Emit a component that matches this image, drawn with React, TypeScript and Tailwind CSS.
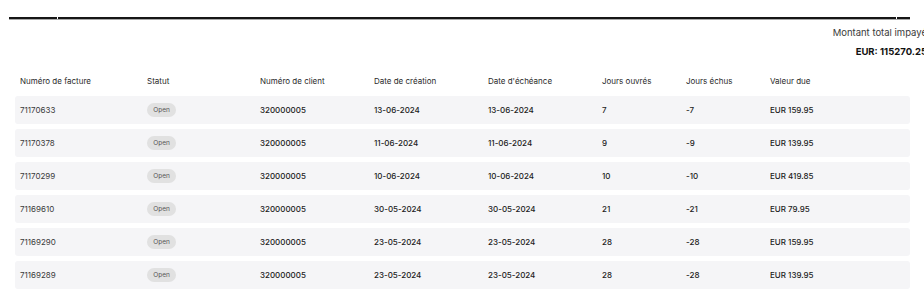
import React from 'react';

const rows = [
  { facture: '71170633', client: '320000005', creation: '13-06-2024', echeance: '13-06-2024', ouvres: '7', echus: '-7', valeur: 'EUR 159.95' },
  { facture: '71170378', client: '320000005', creation: '11-06-2024', echeance: '11-06-2024', ouvres: '9', echus: '-9', valeur: 'EUR 139.95' },
  { facture: '71170299', client: '320000005', creation: '10-06-2024', echeance: '10-06-2024', ouvres: '10', echus: '-10', valeur: 'EUR 419.85' },
  { facture: '71169610', client: '320000005', creation: '30-05-2024', echeance: '30-05-2024', ouvres: '21', echus: '-21', valeur: 'EUR 79.95' },
  { facture: '71169290', client: '320000005', creation: '23-05-2024', echeance: '23-05-2024', ouvres: '28', echus: '-28', valeur: 'EUR 159.95' },
  { facture: '71169289', client: '320000005', creation: '23-05-2024', echeance: '23-05-2024', ouvres: '28', echus: '-28', valeur: 'EUR 139.95' },
];

const cols = 'grid grid-cols-[127px_113px_114px_114px_114px_84px_84px_1fr] items-center pl-[5px]';

export default function App() {
  return (
    <div className="w-[924px] h-[307px] overflow-hidden bg-white" style={{ fontFamily: 'Inter, "Noto Sans", sans-serif' }}>
      {/* barre du haut */}
      <div className="pt-[17px] pl-[9px] w-[910px]">
        <div className="flex gap-px">
          <div className="w-[48px] h-[2px] bg-[#161616]" />
          <div className="flex-1 h-[2px] bg-[#161616]" />
          <div className="w-[13px] h-[2px] bg-[#161616]" />
        </div>
        <div className="h-px bg-[#a8a8a8]" />
      </div>

      {/* total */}
      <div className="w-[927px] flex flex-col items-end pt-[8px] text-[9.5px] leading-[10px] text-[#3a3a3a]">
        <div>Montant total impayé</div>
        <div className="mt-[9px] font-bold text-[#111]">EUR: 115270.25</div>
      </div>

      {/* tableau */}
      <div className="mt-[13px] ml-[15px] w-[895px]">
        <div className={`${cols} h-[22px] text-[8px] text-[#2a2a2a]`}>
          <div>Numéro de facture</div>
          <div>Statut</div>
          <div>Numéro de client</div>
          <div>Date de création</div>
          <div>Date d'échéance</div>
          <div>Jours ouvrés</div>
          <div>Jours échus</div>
          <div>Valeur due</div>
        </div>
        <div className="mt-[4px] flex flex-col gap-[5px]">
          {rows.map((r) => (
            <div key={r.facture} className={`${cols} h-[28px] rounded-[3px] bg-[#f5f5f7] text-[8px] text-[#222]`}>
              <div className="text-[#3a3a3a]">{r.facture}</div>
              <div>
                <span className="inline-flex items-center justify-center w-[29px] h-[14px] rounded-full bg-[#e1e1e1] text-[6.5px] text-[#555]">Open</span>
              </div>
              <div className="font-medium">{r.client}</div>
              <div className="font-medium">{r.creation}</div>
              <div className="font-medium">{r.echeance}</div>
              <div className="font-medium">{r.ouvres}</div>
              <div className="font-medium">{r.echus}</div>
              <div className="font-medium">{r.valeur}</div>
            </div>
          ))}
        </div>
      </div>
    </div>
  );
}
